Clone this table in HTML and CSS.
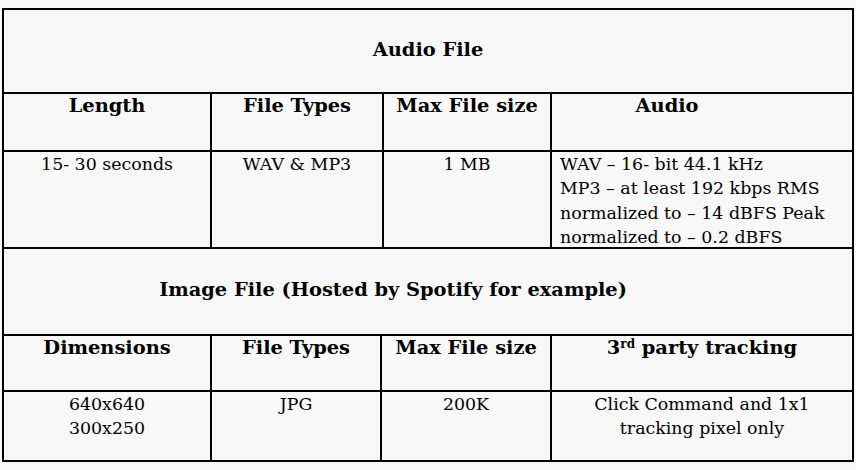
FILE: index.html
```html
<!DOCTYPE html>
<html>
<head>
<meta charset="utf-8">
<link rel="stylesheet" href="styles.css">
</head>
<body>
<div class="sheet">
  <div class="grid grid-audio">
    <div class="cell title span4">Audio File</div>
    <div class="cell head">Length</div>
    <div class="cell head">File Types</div>
    <div class="cell head">Max File size</div>
    <div class="cell head shift">Audio</div>
    <div class="cell body">15- 30 seconds</div>
    <div class="cell body">WAV &amp; MP3</div>
    <div class="cell body">1 MB</div>
    <div class="cell body left">WAV – 16- bit 44.1 kHz<br>MP3 – at least 192 kbps RMS<br>normalized to – 14 dBFS Peak<br>normalized to – 0.2 dBFS</div>
  </div>
  <div class="grid grid-image">
    <div class="cell title span4 shift">Image File (Hosted by Spotify for example)</div>
    <div class="cell head">Dimensions</div>
    <div class="cell head">File Types</div>
    <div class="cell head">Max File size</div>
    <div class="cell head">3<sup>rd</sup> party tracking</div>
    <div class="cell body">640x640<br>300x250</div>
    <div class="cell body">JPG</div>
    <div class="cell body">200K</div>
    <div class="cell body">Click Command and 1x1<br>tracking pixel only</div>
  </div>
</div>
</body>
</html>
```

FILE: styles.css
```css
html, body {
  margin: 0;
  padding: 0;
  background: #f8f8f8;
}
body {
  font-family: "DejaVu Serif", "Liberation Serif", serif;
  color: #000;
}
.sheet {
  margin: 8px 0 0 2px;
  width: 852px;
  border-top: 2px solid #000;
  border-left: 2px solid #000;
  box-sizing: border-box;
}
.grid {
  display: grid;
}
.grid-audio {
  grid-template-columns: 208px 172px 168px 302px;
  grid-template-rows: 84px 58px 97px;
}
.grid-image {
  grid-template-columns: 208px 170px 170px 302px;
  grid-template-rows: 87px 56px 70px;
}
.cell {
  border-right: 2px solid #000;
  border-bottom: 2px solid #000;
  text-align: center;
}
.span4 {
  grid-column: 1 / span 4;
}
.title {
  font-weight: bold;
  font-size: 19.4px;
  line-height: 24px;
  display: flex;
  align-items: center;
  justify-content: center;
  padding-bottom: 3px;
}
.head {
  font-weight: bold;
  font-size: 19.4px;
  line-height: 24px;
  padding-top: 0;
}
.shift {
  padding-right: 70px;
}
.body {
  font-size: 17.4px;
  line-height: 24.4px;
  padding-top: 0;
}
.left {
  text-align: left;
  padding-left: 8px;
}
sup {
  font-size: 12px;
  line-height: 0;
  vertical-align: 6px;
}
```
